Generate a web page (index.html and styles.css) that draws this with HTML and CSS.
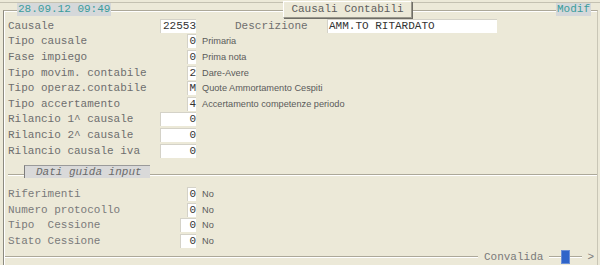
FILE: index.html
```html
<!DOCTYPE html>
<html lang="it">
<head>
    <meta charset="UTF-8">
    <title>Causali Contabili</title>
    <link rel="stylesheet" href="styles.css">
</head>
<body>
    <div class="screen">
        <div class="topline"></div>
        <div class="frame">
            <div class="header">
                <span class="clock">28.09.12 09:49</span>
                <span class="title">Causali Contabili</span>
                <span class="mode">Modif</span>
            </div>

            <div class="row">
                <span class="label">Causale</span>
                <span class="field"><span class="box wide">22553</span></span>
                <span class="label-descr">Descrizione</span>
                <span class="box text">AMM.TO RITARDATO</span>
            </div>
            <div class="row">
                <span class="label">Tipo causale</span>
                <span class="field"><span class="box">0</span></span>
                <span class="desc">Primaria</span>
            </div>
            <div class="row">
                <span class="label">Fase impiego</span>
                <span class="field"><span class="box">0</span></span>
                <span class="desc">Prima nota</span>
            </div>
            <div class="row">
                <span class="label">Tipo movim. contabile</span>
                <span class="field"><span class="box">2</span></span>
                <span class="desc">Dare-Avere</span>
            </div>
            <div class="row">
                <span class="label">Tipo operaz.contabile</span>
                <span class="field"><span class="box">M</span></span>
                <span class="desc">Quote Ammortamento Cespiti</span>
            </div>
            <div class="row">
                <span class="label">Tipo accertamento</span>
                <span class="field"><span class="box">4</span></span>
                <span class="desc">Accertamento competenze periodo</span>
            </div>
            <div class="row">
                <span class="label">Rilancio 1^ causale</span>
                <span class="field"><span class="box wide">0</span></span>
            </div>
            <div class="row">
                <span class="label">Rilancio 2^ causale</span>
                <span class="field"><span class="box wide">0</span></span>
            </div>
            <div class="row">
                <span class="label">Rilancio causale iva</span>
                <span class="field"><span class="box wide">0</span></span>
            </div>

            <div class="section">
                <span class="section-tab">Dati guida input</span>
            </div>

            <div class="row light">
                <span class="label">Riferimenti</span>
                <span class="field"><span class="box">0</span></span>
                <span class="desc">No</span>
            </div>
            <div class="row light">
                <span class="label">Numero protocollo</span>
                <span class="field"><span class="box">0</span></span>
                <span class="desc">No</span>
            </div>
            <div class="row light">
                <span class="label">Tipo&nbsp; Cessione</span>
                <span class="field"><span class="box mid">0</span></span>
                <span class="desc">No</span>
            </div>
            <div class="row light">
                <span class="label">Stato Cessione</span>
                <span class="field"><span class="box mid">0</span></span>
                <span class="desc">No</span>
            </div>

            <div class="footer">
                <span class="rule"></span>
                <span class="confirm">Convalida</span>
                <span class="rule short"></span>
                <span class="knob"></span>
                <span class="rule short"></span>
                <span class="arrow">&gt;</span>
            </div>
        </div>
    </div>
</body>
</html>
```

FILE: styles.css
```css
body {
    margin: 0;
    background-color: #ece9d8;
    font-family: "Liberation Mono", "Courier New", monospace;
    font-size: 11px;
    color: #6e6e6e;
}
.screen {
    width: 600px;
    height: 265px;
    overflow: hidden;
}
.topline {
    height: 1px;
    margin-top: 2px;
    background: #c4c1b1;
}
.frame {
    height: 254px;
    margin: 7px 2px 0 3px;
    padding: 0 0 0 4px;
    border-left: 1px solid #8c8a80;
    border-top: 1px solid #aca899;
    border-right: 1px solid #c9c6b6;
    box-shadow: inset 1px 1px 0 #ffffff;
}
.header {
    display: flex;
    align-items: flex-start;
    height: 17px;
    margin-top: -10px;
}
.clock {
    margin: 2px 0 0 9px;
    padding: 0 1px;
    height: 13px;
    line-height: 13px;
    background: #d5d8da;
    color: #3a9c9c;
}
.title {
    margin-left: 172px;
    height: 15px;
    line-height: 15px;
    padding: 0 7px;
    background: #ece9d8;
    color: #5e5e5e;
    border: 1px solid #9a988c;
    border-top-color: #ffffff;
    border-left-color: #ffffff;
    box-shadow: 1px 1px 0 #6f6d66;
}
.mode {
    margin: 2px 6px 0 auto;
    padding: 0 1px;
    height: 13px;
    line-height: 13px;
    background: #d5d8da;
    color: #3a9c9c;
}
.row {
    display: flex;
    align-items: center;
    height: 15.6px;
}
.label {
    width: 152px;
    white-space: pre;
}
.field {
    width: 36px;
    display: flex;
    justify-content: flex-end;
}
.box {
    width: 9px;
    height: 14px;
    line-height: 15px;
    text-align: right;
    background: #ffffff;
    color: #333333;
    box-shadow: inset 1px 1px 0 #d4d2c8;
}
.box.wide {
    width: 36px;
}
.box.mid {
    width: 16px;
}
.label-descr {
    margin-left: 39px;
    width: 92px;
}
.box.text {
    width: 168px;
    padding-left: 2px;
    text-align: left;
}
.desc {
    margin-left: 6px;
    font-family: "Liberation Sans", Arial, sans-serif;
    font-size: 9.2px;
    color: #5a5a5a;
}
.section {
    height: 27.8px;
    display: flex;
    align-items: flex-start;
    background: linear-gradient(to bottom, transparent 16px, #aca899 16px, #aca899 17px, #ffffff 17px, #ffffff 18px, transparent 18px);
}
.section-tab {
    margin: 7px 0 0 16px;
    height: 12px;
    line-height: 13px;
    padding: 0 8px 0 11px;
    background: #d9d9d9;
    border-left: 1px solid #7e7e7e;
    border-top: 1px solid #9a9a9a;
    font-style: italic;
    color: #6a6a6a;
}
.row.light {
    color: #7a7a7a;
}
.footer {
    display: flex;
    align-items: center;
    height: 17px;
    margin-left: -3px;
}
.rule {
    flex: 1;
    height: 1px;
    background: #aca899;
    border-bottom: 1px solid #ffffff;
}
.rule.short {
    flex: 0 0 12px;
}
.confirm {
    margin: 0 6px;
    color: #7a7a7a;
}
.knob {
    width: 7px;
    height: 12px;
    background: #2f64c9;
    border: 1px solid #6b8fd6;
}
.arrow {
    margin: 0 3px 0 5px;
    color: #7a7a7a;
}
```
